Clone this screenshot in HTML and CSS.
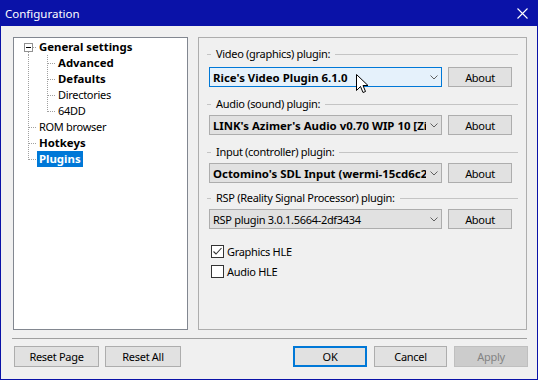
FILE: index.html
```html
<!DOCTYPE html>
<html lang="en">
<head>
    <meta charset="UTF-8">
    <title>Configuration</title>
    <link rel="stylesheet" href="styles.css">
</head>
<body>

    <div class="window">
        <div class="titlebar">
            <span class="title">Configuration</span>
            <svg class="close" width="11" height="11" viewBox="0 0 11 11">
                <path d="M0.5 0.5 L10.5 10.5 M10.5 0.5 L0.5 10.5" stroke="#fff" stroke-width="1.1" fill="none"/>
            </svg>
        </div>

        <div class="content">
            <div class="panes">
                <!-- settings tree -->
                <div class="tree">
                    <div class="row root">
                        <span class="gut"><span class="toggle"></span></span>
                        <span class="lbl bold">General settings</span>
                    </div>
                    <div class="row child">
                        <span class="gut"></span>
                        <span class="lbl bold">Advanced</span>
                    </div>
                    <div class="row child">
                        <span class="gut"></span>
                        <span class="lbl bold">Defaults</span>
                    </div>
                    <div class="row child">
                        <span class="gut"></span>
                        <span class="lbl">Directories</span>
                    </div>
                    <div class="row child last">
                        <span class="gut"></span>
                        <span class="lbl">64DD</span>
                    </div>
                    <div class="row top">
                        <span class="gut"></span>
                        <span class="lbl">ROM browser</span>
                    </div>
                    <div class="row top">
                        <span class="gut"></span>
                        <span class="lbl bold">Hotkeys</span>
                    </div>
                    <div class="row top last">
                        <span class="gut"></span>
                        <span class="lbl bold selected">Plugins</span>
                    </div>
                </div>

                <!-- plugins page -->
                <div class="page">
                    <div class="group">
                        <div class="legend">Video (graphics) plugin:</div>
                        <div class="pick">
                            <div class="combo hot bold">
                                <span class="combo-text">Rice's Video Plugin 6.1.0</span>
                                <svg class="chev" width="8" height="5" viewBox="0 0 8 5"><path d="M0.5 0.5 L4 4 L7.5 0.5" stroke="#606060" fill="none"/></svg>
                                <svg class="cursor" width="13" height="20" viewBox="0 0 13 20">
                                    <path d="M0.5 0.5 L0.5 16.5 L4.5 12.5 L7 18.5 L9.5 17.5 L7 11.5 L12 11.5 Z" fill="#fff" stroke="#000" stroke-linejoin="miter"/>
                                </svg>
                            </div>
                            <button class="btn about">About</button>
                        </div>
                    </div>

                    <div class="group">
                        <div class="legend">Audio (sound) plugin:</div>
                        <div class="pick">
                            <div class="combo bold">
                                <span class="combo-text">LINK's Azimer's Audio v0.70 WIP 10 [Zilmar]</span>
                                <svg class="chev" width="8" height="5" viewBox="0 0 8 5"><path d="M0.5 0.5 L4 4 L7.5 0.5" stroke="#606060" fill="none"/></svg>
                            </div>
                            <button class="btn about">About</button>
                        </div>
                    </div>

                    <div class="group">
                        <div class="legend">Input (controller) plugin:</div>
                        <div class="pick">
                            <div class="combo bold">
                                <span class="combo-text">Octomino's SDL Input (wermi-15cd6c2)</span>
                                <svg class="chev" width="8" height="5" viewBox="0 0 8 5"><path d="M0.5 0.5 L4 4 L7.5 0.5" stroke="#606060" fill="none"/></svg>
                            </div>
                            <button class="btn about">About</button>
                        </div>
                    </div>

                    <div class="group rsp">
                        <div class="legend">RSP (Reality Signal Processor) plugin:</div>
                        <div class="pick">
                            <div class="combo">
                                <span class="combo-text">RSP plugin 3.0.1.5664-2df3434</span>
                                <svg class="chev" width="8" height="5" viewBox="0 0 8 5"><path d="M0.5 0.5 L4 4 L7.5 0.5" stroke="#606060" fill="none"/></svg>
                            </div>
                            <button class="btn about">About</button>
                        </div>
                    </div>

                    <div class="checks">
                        <label class="check">
                            <span class="box">
                                <svg width="11" height="11" viewBox="0 0 11 11"><path d="M1.5 5.5 L4 8 L9.5 2" stroke="#333" stroke-width="1.1" fill="none"/></svg>
                            </span>
                            Graphics HLE
                        </label>
                        <label class="check">
                            <span class="box"></span>
                            Audio HLE
                        </label>
                    </div>
                </div>
            </div>

            <div class="separator"></div>

            <div class="buttons">
                <button class="btn reset-page">Reset Page</button>
                <button class="btn reset-all">Reset All</button>
                <button class="btn ok default">OK</button>
                <button class="btn cancel">Cancel</button>
                <button class="btn apply" disabled>Apply</button>
            </div>
        </div>
    </div>

</body>
</html>
```

FILE: styles.css
```css
body {
    margin: 0;
    padding: 0;
    background-color: #f0f0f0;
    font-family: "Noto Sans", "Open Sans", sans-serif;
    font-size: 11px;
    letter-spacing: -0.3px;
    color: #000;
}

.window {
    width: 538px;
    height: 380px;
    box-sizing: border-box;
    border: 1px solid #0a12a8;
    border-top: none;
    background-color: #f0f0f0;
    overflow: hidden;
}

.titlebar {
    height: 26px;
    background-color: #0a12a8;
    color: #fff;
    display: flex;
    align-items: center;
    justify-content: space-between;
    padding: 0 9px 0 4px;
}

.title {
    font-size: 11.5px;
    letter-spacing: 0;
}

.close {
    display: block;
}

.content {
    padding: 11px 10px 0 12px;
}

.panes {
    display: flex;
    gap: 10px;
    height: 293px;
}

.bold {
    font-weight: bold;
    font-size: 11.4px;
    letter-spacing: 0;
}

/* tree */

.tree {
    width: 175px;
    box-sizing: border-box;
    border: 1px solid #828790;
    background-color: #fff;
    padding-top: 1px;
}

.row {
    display: flex;
    height: 16px;
    line-height: 16px;
    white-space: nowrap;
}

.gut {
    flex: none;
    height: 16px;
    background-repeat: no-repeat;
}

.lbl {
    padding: 0 2px;
    height: 16px;
}

.lbl.selected {
    background-color: #0078d7;
    color: #fff;
}

/* dotted connectors drawn with gradients */
.row.root .gut {
    width: 23px;
    display: flex;
    align-items: center;
    background-image:
        repeating-linear-gradient(to right, #a0a0a0 0 1px, transparent 1px 2px),
        repeating-linear-gradient(to bottom, #a0a0a0 0 1px, transparent 1px 2px);
    background-size: 4px 1px, 1px 3px;
    background-position: 19px 8px, 14px 13px;
}

.toggle {
    width: 9px;
    height: 9px;
    box-sizing: border-box;
    border: 1px solid #919191;
    margin-left: 10px;
    background:
        linear-gradient(#000, #000) center / 5px 1px no-repeat,
        #fff;
}

.row.top .gut {
    width: 23px;
    background-image:
        repeating-linear-gradient(to right, #a0a0a0 0 1px, transparent 1px 2px),
        repeating-linear-gradient(to bottom, #a0a0a0 0 1px, transparent 1px 2px);
    background-size: 9px 1px, 1px 16px;
    background-position: 15px 8px, 14px 0;
}

.row.top.last .gut {
    background-size: 9px 1px, 1px 9px;
}

.row.child .gut {
    width: 42px;
    background-image:
        repeating-linear-gradient(to right, #a0a0a0 0 1px, transparent 1px 2px),
        repeating-linear-gradient(to bottom, #a0a0a0 0 1px, transparent 1px 2px),
        repeating-linear-gradient(to bottom, #a0a0a0 0 1px, transparent 1px 2px);
    background-size: 9px 1px, 1px 16px, 1px 16px;
    background-position: 34px 8px, 33px 0, 14px 0;
}

.row.child.last .gut {
    background-size: 9px 1px, 1px 9px, 1px 16px;
}

/* page */

.page {
    width: 329px;
    box-sizing: border-box;
    border: 1px solid #adadad;
    padding: 8px 8px 0 8px;
}

.group + .group {
    margin-top: 9px;
}

.group.rsp {
    margin-top: 7px;
}

.legend {
    display: flex;
    align-items: center;
    gap: 5px;
    height: 16px;
    line-height: 16px;
    white-space: nowrap;
}

.legend::before {
    content: "";
    width: 4px;
    height: 1px;
    background-color: #c4c4c4;
}

.legend::after {
    content: "";
    flex: 1;
    height: 1px;
    background-color: #c4c4c4;
}

.pick {
    display: flex;
    gap: 6px;
    margin: 3px 0 0 2px;
}

.group:first-child .pick {
    margin-top: 5px;
}

.combo {
    position: relative;
    width: 233px;
    height: 20px;
    box-sizing: border-box;
    border: 1px solid #adadad;
    background-color: #e1e1e1;
    display: flex;
    align-items: center;
    padding-left: 3px;
}

.combo.hot {
    border-color: #0078d7;
    background-color: #e5f1fb;
}

.combo-text {
    flex: 1;
    overflow: hidden;
    white-space: nowrap;
}

.chev {
    flex: none;
    margin: 0 3px 0 4px;
}

.cursor {
    position: absolute;
    left: 146px;
    top: 6px;
}

.btn {
    font-family: inherit;
    font-size: 11px;
    letter-spacing: -0.3px;
    color: #000;
    height: 20px;
    padding: 0;
    border: 1px solid #adadad;
    background-color: #e1e1e1;
    box-sizing: border-box;
}

.about {
    width: 64px;
}

.checks {
    margin-top: 12px;
    padding-left: 4px;
}

.check {
    display: flex;
    align-items: center;
    gap: 3px;
    height: 20px;
}

.box {
    width: 13px;
    height: 13px;
    box-sizing: border-box;
    border: 1px solid #333;
    background-color: #fff;
    display: flex;
    align-items: center;
    justify-content: center;
}

.box svg {
    display: block;
}

/* bottom */

.separator {
    height: 1px;
    margin: 8px 0 0 -1px;
    background-color: #a0a0a0;
}

.buttons {
    display: flex;
    gap: 7px;
    margin-top: 7px;
    padding-left: 1px;
}

.buttons .btn {
    height: 21px;
}

.reset-page {
    width: 85px;
}

.reset-all {
    width: 76px;
    margin-left: -1px;
}

.ok {
    width: 74px;
    margin-left: auto;
}

.cancel {
    width: 73px;
}

.apply {
    width: 74px;
    margin-right: -1px;
}

.btn.default {
    border: 2px solid #0078d7;
}

.btn:disabled {
    background-color: #cccccc;
    border-color: #bfbfbf;
    color: #838383;
}
```
